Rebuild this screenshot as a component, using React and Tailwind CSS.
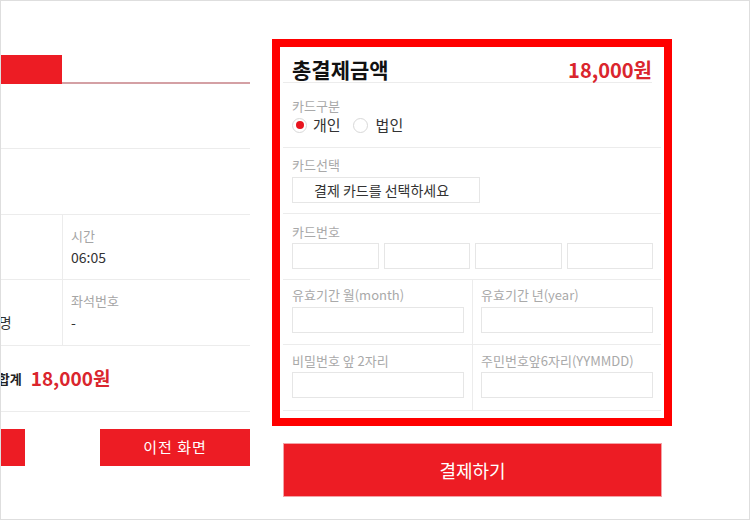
const font = { fontFamily: '"Noto Sans CJK KR", "Noto Sans", sans-serif' };

function InfoCell({ label, value, className = "" }) {
  return (
    <div className={"pt-[12px] " + className}>
      <div className="h-[18px] text-[13px] leading-[18px] text-[#a5a5a5]">{label}</div>
      <div className="mt-[2px] text-[14px] leading-[20px] text-[#333]">{value}</div>
    </div>
  );
}

function Field({ label, className = "", children }) {
  return (
    <div className={className}>
      <div className="text-[13px] leading-[18px] text-[#a9a9a9]">{label}</div>
      {children}
    </div>
  );
}

function Box({ className = "" }) {
  return <div className={"h-[26px] border border-[#e6e6e6] bg-white " + className} />;
}

export default function App() {
  return (
    <div
      className="flex h-[520px] w-[750px] items-start overflow-hidden border border-[#dedede] bg-white"
      style={font}
    >
      {/* left: reservation summary, clipped on the left */}
      <div className="w-[249px] shrink-0 overflow-hidden pt-[54px]">
        <div className="ml-[-150px] w-[399px]">
          <div className="flex items-end">
            <div className="h-[29px] w-[211px] bg-[#ed1c24]" />
            <div className="h-[2px] flex-1 bg-[#d4a0a4]" />
          </div>

          <div className="h-[65px] border-b border-[#ececec]" />
          <div className="h-[66px] border-b border-[#ececec]" />

          <div className="flex h-[65px] border-b border-[#ececec]">
            <div className="w-[212px] border-r border-[#ececec]" />
            <InfoCell label="시간" value="06:05" className="flex-1 pl-[8px]" />
          </div>
          <div className="flex h-[66px] border-b border-[#ececec]">
            <InfoCell label="" value="성인 1명" className="w-[212px] border-r border-[#ececec] pl-[111px]" />
            <InfoCell label="좌석번호" value="-" className="flex-1 pl-[8px]" />
          </div>

          <div className="flex h-[66px] items-center border-b border-[#ececec] pl-[105px]">
            <span className="text-[13px] font-bold text-[#222]">총 결제 합계</span>
            <span className="ml-[9px] text-[19px] font-bold text-[#da252d]">18,000원</span>
          </div>

          <div className="mt-[17px] flex justify-between pl-[24px]">
            <div className="h-[37px] w-[150px] bg-[#ed1c24]" />
            <button className="h-[37px] w-[150px] bg-[#ed1c24] text-[15px] tracking-[1px] text-white">
              이전 화면
            </button>
          </div>
        </div>
      </div>

      {/* right: payment form */}
      <div className="ml-[22px] w-[400px] shrink-0 pt-[38px]">
        <div className="h-[387px] border-[8px] border-[#ff0000] px-[3px]">
          <div className="mr-[9px] flex h-[36px] items-center justify-between border-b border-[#ececec] pl-[9px] pt-[10px]">
            <span className="text-[21px] font-bold text-[#111]">총결제금액</span>
            <span className="text-[20px] font-bold text-[#da252d]">18,000원</span>
          </div>

          <Field label="카드구분" className="border-b border-[#ececec] pb-[12px] pl-[9px] pt-[14px]">
            <div className="flex h-[20px] items-center text-[15px] text-[#333]">
              <span className="flex h-[15px] w-[15px] items-center justify-center rounded-full border border-[#d8d8d8]">
                <span className="h-[8px] w-[8px] rounded-full bg-[#e8141f]" />
              </span>
              <span className="ml-[6px]">개인</span>
              <span className="ml-[12px] h-[15px] w-[15px] rounded-full border border-[#d8d8d8]" />
              <span className="ml-[8px]">법인</span>
            </div>
          </Field>

          <Field label="카드선택" className="border-b border-[#ececec] pb-[10px] pl-[9px] pt-[8px]">
            <div className="mt-[3px] flex h-[26px] w-[188px] items-center border border-[#e6e6e6] pl-[21px] text-[14px] text-[#333]">
              결제 카드를 선택하세요
            </div>
          </Field>

          <Field label="카드번호" className="border-b border-[#ececec] pb-[10px] pl-[9px] pr-[8px] pt-[9px]">
            <div className="mt-[2px] grid grid-cols-4 gap-[5px]">
              <Box />
              <Box />
              <Box />
              <Box />
            </div>
          </Field>

          <div className="flex border-b border-[#ececec]">
            <Field label="유효기간 월(month)" className="w-[190px] border-r border-[#ececec] pb-[11px] pl-[9px] pr-[8px] pt-[6px]">
              <Box className="mt-[3px]" />
            </Field>
            <Field label="유효기간 년(year)" className="flex-1 pb-[11px] pl-[8px] pr-[8px] pt-[6px]">
              <Box className="mt-[3px]" />
            </Field>
          </div>

          <div className="flex border-b border-[#ececec]">
            <Field label="비밀번호 앞 2자리" className="w-[190px] border-r border-[#ececec] pb-[12px] pl-[9px] pr-[8px] pt-[7px]">
              <Box className="mt-[2px]" />
            </Field>
            <Field label="주민번호앞6자리(YYMMDD)" className="flex-1 pb-[12px] pl-[8px] pr-[8px] pt-[7px]">
              <Box className="mt-[2px]" />
            </Field>
          </div>
        </div>

        <button className="ml-[11px] mt-[17px] h-[54px] w-[379px] border border-[#f3a3a7] bg-[#ed1c24] text-[18px] text-white">
          결제하기
        </button>
      </div>
    </div>
  );
}
